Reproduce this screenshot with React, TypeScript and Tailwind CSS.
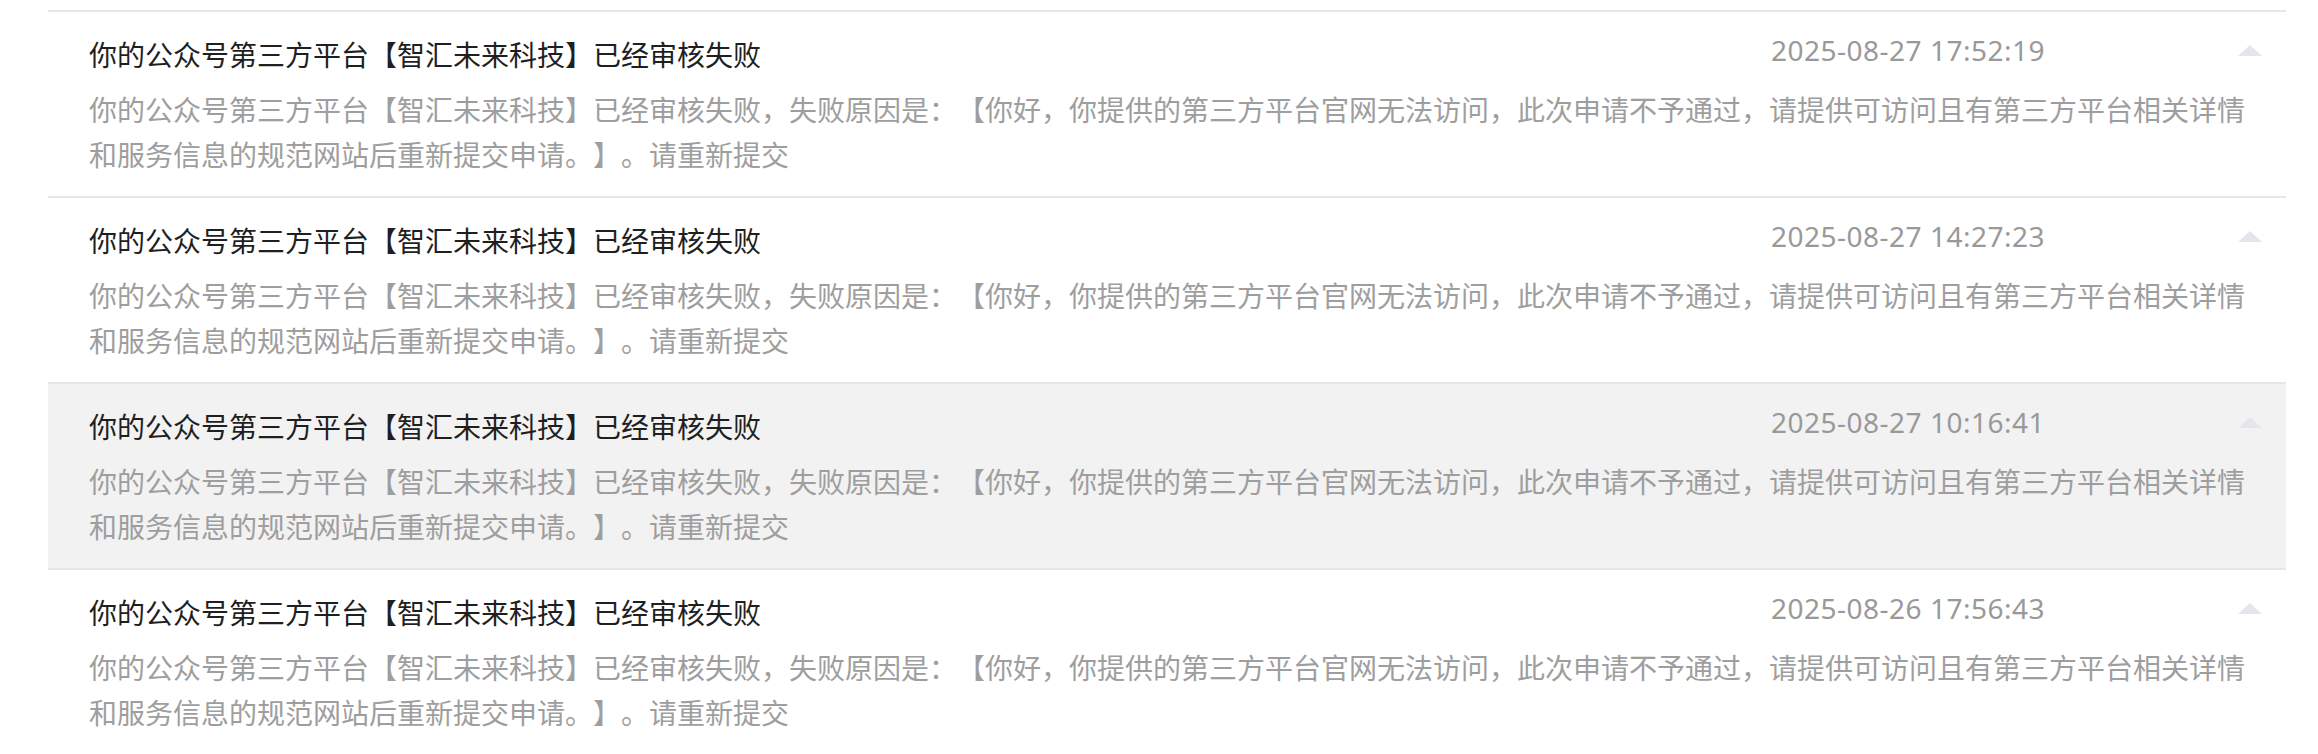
import React from 'react';

interface Notice {
  id: number;
  title: string;
  content: string;
  time: string;
}

const notices: Notice[] = [
  { id: 1, title: '你的公众号第三方平台【智汇未来科技】已经审核失败', content: '你的公众号第三方平台【智汇未来科技】已经审核失败，失败原因是：【你好，你提供的第三方平台官网无法访问，此次申请不予通过，请提供可访问且有第三方平台相关详情和服务信息的规范网站后重新提交申请。】。请重新提交', time: '2025-08-27 17:52:19' },
  { id: 2, title: '你的公众号第三方平台【智汇未来科技】已经审核失败', content: '你的公众号第三方平台【智汇未来科技】已经审核失败，失败原因是：【你好，你提供的第三方平台官网无法访问，此次申请不予通过，请提供可访问且有第三方平台相关详情和服务信息的规范网站后重新提交申请。】。请重新提交', time: '2025-08-27 14:27:23' },
  { id: 3, title: '你的公众号第三方平台【智汇未来科技】已经审核失败', content: '你的公众号第三方平台【智汇未来科技】已经审核失败，失败原因是：【你好，你提供的第三方平台官网无法访问，此次申请不予通过，请提供可访问且有第三方平台相关详情和服务信息的规范网站后重新提交申请。】。请重新提交', time: '2025-08-27 10:16:41' },
  { id: 4, title: '你的公众号第三方平台【智汇未来科技】已经审核失败', content: '你的公众号第三方平台【智汇未来科技】已经审核失败，失败原因是：【你好，你提供的第三方平台官网无法访问，此次申请不予通过，请提供可访问且有第三方平台相关详情和服务信息的规范网站后重新提交申请。】。请重新提交', time: '2025-08-26 17:56:43' },
];

const NoticeRow: React.FC<{ item: Notice; active?: boolean }> = ({ item, active }) => (
  <div className={`border-t-2 border-[#e6e6ea] pl-[41px] pr-[24px] pt-[20px] pb-[19px] ${active ? 'bg-[#f2f2f2]' : 'bg-white'}`}>
    <div className="flex items-start">
      <div className="flex-1 text-[28px] leading-[45px] text-[#1f1f1f]">{item.title}</div>
      <div className="text-[28px] leading-[36px] text-[#999999] font-['Noto_Sans','Noto_Sans_CJK_SC',sans-serif] tracking-[0.5px]">
        {item.time}
      </div>
      <div className="ml-[193px] pt-[13px]">
        <svg width="24" height="11" viewBox="0 0 24 11">
          <polygon points="12,0 24,11 0,11" fill="#e5e6eb" />
        </svg>
      </div>
    </div>
    <div className="mt-[10px] pr-[8px] text-[28px] leading-[45px] text-[#9e9e9e]">{item.content}</div>
  </div>
);

export default function App() {
  return (
    <div className="min-h-screen bg-white pt-[10px] pl-[48px] pr-[32px] font-['Noto_Sans_CJK_SC','Noto_Sans',sans-serif] [text-spacing-trim:space-all]">
      {notices.map((n) => (
        <NoticeRow key={n.id} item={n} active={n.id === 3} />
      ))}
    </div>
  );
}
